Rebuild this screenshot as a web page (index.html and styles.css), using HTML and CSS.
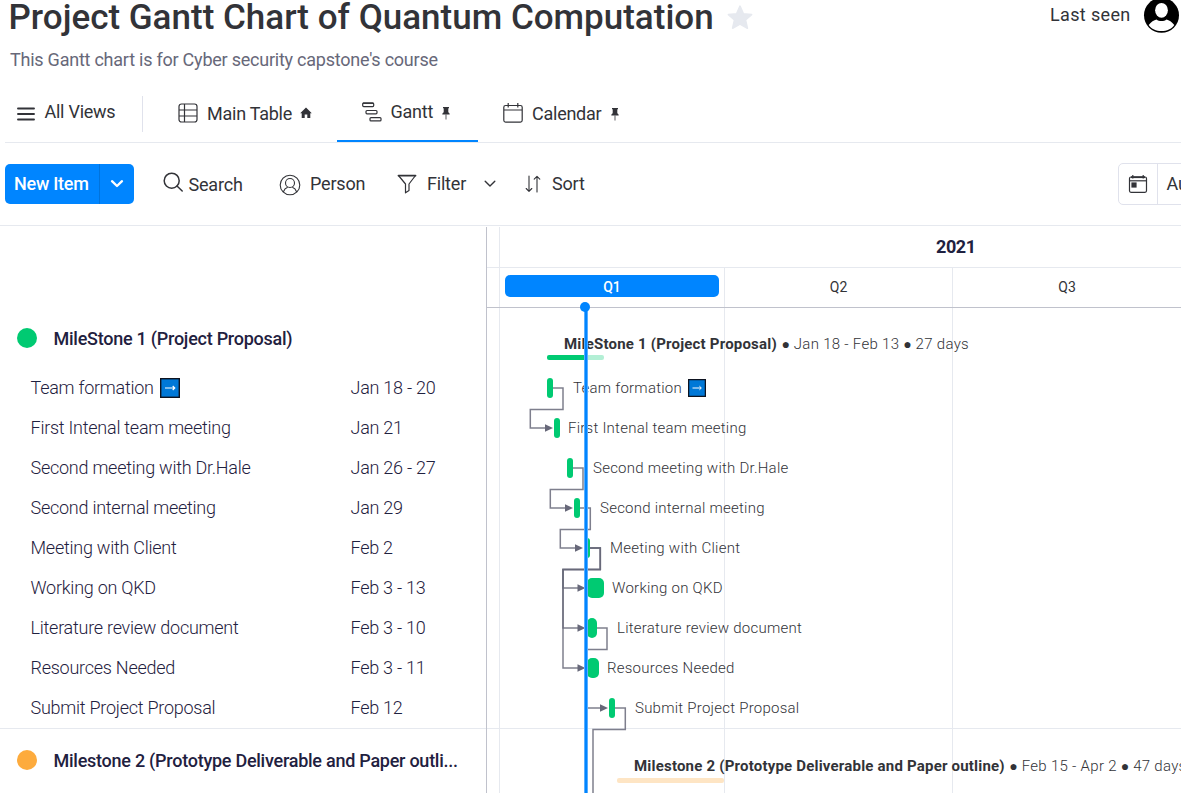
FILE: index.html
```html
<!DOCTYPE html>
<html lang="en">
<head>
<meta charset="utf-8">
<title>Project Gantt Chart of Quantum Computation</title>
<link rel="stylesheet" href="styles.css">
</head>
<body>
<div class="app">
  <header class="board-header">
    <div class="title-line">
      <h1 class="title">Project Gantt Chart of Quantum Computation</h1>
      <svg class="star" width="26" height="25" viewBox="0 0 26 25"><path d="M13 1.2 16.4 8.8 24.6 9.6 18.5 15 20.4 23.2 13 19.1 5.6 23.2 7.5 15 1.4 9.6 9.6 8.8Z" fill="#e6e9ef" stroke="#e6e9ef" stroke-width="1.6" stroke-linejoin="round"/></svg>
      <span class="last-seen">Last seen</span>
      <svg class="avatar" width="36" height="36" viewBox="0 0 36 36"><circle cx="18.500" cy="18.300" r="17.500"/><ellipse cx="18.500" cy="13.300" rx="6.400" ry="7.400" fill="#fff"/><path d="M5.700 28C8 25 11 23 13.500 22.500 16 24.500 21 24.500 23.500 22.500 26 23 29 25 31.300 28 28.500 32 24 34 18.500 34S8.500 32 5.700 28Z" fill="#fff"/></svg>
    </div>
    <p class="subtitle">This Gantt chart is for Cyber security capstone's course</p>
  </header>

  <nav class="views">
    <div class="view view-all">
      <svg width="18" height="14" viewBox="0 0 18 14"><path d="M1 1.500H17M1 7H17M1 12.500H17" stroke="#323338" stroke-width="1.900" stroke-linecap="round"/></svg>
      <span>All Views</span>
    </div>
    <div class="view view-table">
      <svg width="20" height="20" viewBox="0 0 20 20" fill="none" stroke="#323338" stroke-width="1.200"><rect x="1" y="1" width="18" height="18" rx="2.500"/><path d="M1 7H19M1 13H19M6.500 1V19"/></svg>
      <span>Main Table</span>
      <svg class="home" width="12" height="12" viewBox="0 0 12 12" fill="#323338"><path d="M6 .5 11.800 6.300H10.300V11H7.300V7.500H4.700V11H1.700V6.300H.2Z"/></svg>
    </div>
    <div class="view view-gantt">
      <svg width="20" height="20" viewBox="0 0 20 20" fill="none" stroke="#323338" stroke-width="1.200"><rect x=".7" y="1" width="11" height="3.600" rx="1"/><path d="M1 1.200H11.500" stroke-width="1.500"/><rect x="4" y="8.500" width="11" height="3.300" rx="1"/><rect x="8" y="15.600" width="11" height="3.300" rx="1"/></svg>
      <span>Gantt</span>
      <svg class="pin" width="8" height="13" viewBox="0 0 8 13" fill="#323338"><path d="M1 0H7V1.200H6.300V5.300C7.200 5.800 7.700 6.500 7.700 7.500H.3C.3 6.500.8 5.800 1.700 5.300V1.200H1Z"/><path d="M3.600 7.500H4.400V12.500H3.600Z"/></svg>
    </div>
    <div class="view view-calendar">
      <svg width="20" height="20" viewBox="0 0 20 20" fill="none" stroke="#323338" stroke-width="1.200"><rect x=".8" y="2.500" width="18.400" height="16.600" rx="1.800"/><path d="M1 7H19M5.200 0V4.500M14.800 0V4.500"/></svg>
      <span>Calendar</span>
      <svg class="pin" width="8" height="13" viewBox="0 0 8 13" fill="#323338"><path d="M1 0H7V1.200H6.300V5.300C7.200 5.800 7.700 6.500 7.700 7.500H.3C.3 6.500.8 5.800 1.700 5.300V1.200H1Z"/><path d="M3.600 7.500H4.400V12.500H3.600Z"/></svg>
    </div>
  </nav>

  <div class="toolbar">
    <div class="new-item">
      <span class="new-label">New Item</span>
      <span class="new-arrow"><svg width="14" height="10" viewBox="0 0 14 10"><path d="M2 2.200 7 7 12 2.200" fill="none" stroke="#fff" stroke-width="2.300" stroke-linecap="round" stroke-linejoin="round"/></svg></span>
    </div>
    <div class="tool tool-search">
      <svg width="21" height="21" viewBox="0 0 21 21" fill="none" stroke="#323338" stroke-width="1.500" stroke-linecap="round"><circle cx="8.700" cy="8.700" r="7.500"/><path d="M14 14 19.200 19"/></svg>
      <span>Search</span>
    </div>
    <div class="tool tool-person">
      <svg width="22" height="22" viewBox="0 0 22 22" fill="none" stroke="#323338" stroke-width="1.100"><circle cx="11" cy="11" r="9.800"/><circle cx="11" cy="9" r="4.500"/><path d="M4.300 18C5.300 15.200 7 13.900 8.700 13.300M17.700 18C16.700 15.200 15 13.900 13.300 13.300"/></svg>
      <span>Person</span>
    </div>
    <div class="tool tool-filter">
      <svg width="20" height="20" viewBox="0 0 20 20" fill="none" stroke="#323338" stroke-linejoin="round"><path d="M1.500 1.500H18.500L12 10V16.500L8.500 18.800V10Z" stroke-width="1.200"/><path d="M1.500 1.600H18.500" stroke-width="1.800" stroke-linecap="round"/></svg>
      <span>Filter</span>
      <svg class="caret" width="12" height="8" viewBox="0 0 12 8"><path d="M1.200 1.300 6 6 10.800 1.300" fill="none" stroke="#323338" stroke-width="1.400" stroke-linecap="round" stroke-linejoin="round"/></svg>
    </div>
    <div class="tool tool-sort">
      <svg width="16" height="18" viewBox="0 0 16 18" fill="none" stroke="#323338" stroke-width="1.100" stroke-linecap="round" stroke-linejoin="round"><path d="M4 1V16M1.200 13.500 4 16.300 6.800 13.500M12 17V1.500M9.200 4.200 12 1.400 14.800 4.200"/></svg>
      <span>Sort</span>
    </div>
    <div class="range">
      <span class="range-cal"><svg width="20" height="20" viewBox="0 0 20 20" fill="none" stroke="#323338" stroke-width="1.200"><rect x="1.500" y="3" width="17" height="15.300" rx="1.500"/><path d="M1.500 6.800H18.500"/><path d="M3 3.200H17" stroke-width="1.800"/><path d="M4.800 1V4.500M15.200 1V4.500"/><rect x="4" y="9" width="4" height="4" fill="#323338"/></svg></span>
      <span class="range-auto">Auto</span>
    </div>
  </div>

  <main class="gantt">
    <section class="list">
      <div class="group"><i class="dot green"></i><span>MileStone 1 (Project Proposal)</span></div>
      <div class="item"><span class="name">Team formation <svg class="emoji" width="20" height="20" viewBox="0 0 20 20"><rect x=".7" y=".7" width="18.600" height="18.600" fill="#0078d7" stroke="#0d1320" stroke-width="1.400"/><path d="M5 10H14.500M12.700 8 14.800 10 12.700 12" fill="none" stroke="#fff" stroke-width="1.100"/></svg></span><span>Jan 18 - 20</span></div>
      <div class="item"><span class="name">First Intenal team meeting</span><span>Jan 21</span></div>
      <div class="item"><span class="name">Second meeting with Dr.Hale</span><span>Jan 26 - 27</span></div>
      <div class="item"><span class="name">Second internal meeting</span><span>Jan 29</span></div>
      <div class="item"><span class="name">Meeting with Client</span><span>Feb 2</span></div>
      <div class="item"><span class="name">Working on QKD</span><span>Feb 3 - 13</span></div>
      <div class="item"><span class="name">Literature review document</span><span>Feb 3 - 10</span></div>
      <div class="item"><span class="name">Resources Needed</span><span>Feb 3 - 11</span></div>
      <div class="item"><span class="name">Submit Project Proposal</span><span>Feb 12</span></div>
      <div class="group second"><i class="dot orange"></i><span>Milestone 2 (Prototype Deliverable and Paper outli...</span></div>
    </section>

    <section class="chart">
      <div class="year"><span>2021</span></div>
      <div class="quarters">
        <div class="q q1"><span>Q1</span></div>
        <div class="q q2">Q2</div>
        <div class="q q3">Q3</div>
      </div>
      <div class="rows">
        <div class="milestone" style="--x:60px;--w:57px;--t:77px">
          <div class="m-label"><b>MileStone 1 (Project Proposal)</b><span><i>●</i> Jan 18 - Feb 13 <i>●</i> 27 days</span></div>
          <div class="m-bar green-bar"></div>
        </div>
        <div class="row" style="--x:60px;--w:6px;--g:20px"><i class="bar"></i><span>Team formation <svg class="emoji" width="18" height="18" viewBox="0 0 20 20"><rect x=".7" y=".7" width="18.600" height="18.600" fill="#0078d7" stroke="#0d1320" stroke-width="1.400"/><path d="M5 10H14.500M12.700 8 14.800 10 12.700 12" fill="none" stroke="#fff" stroke-width="1.100"/></svg></span></div>
        <div class="row" style="--x:67px;--w:6px;--g:8px"><i class="bar"></i><span>First Intenal team meeting</span></div>
        <div class="row" style="--x:80px;--w:6px;--g:20px"><i class="bar"></i><span>Second meeting with Dr.Hale</span></div>
        <div class="row" style="--x:87px;--w:6px;--g:20px"><i class="bar"></i><span>Second internal meeting</span></div>
        <div class="row" style="--x:97px;--w:6px;--g:20px"><i class="bar"></i><span>Meeting with Client</span></div>
        <div class="row" style="--x:100px;--w:17px;--g:8px"><i class="bar"></i><span>Working on QKD</span></div>
        <div class="row" style="--x:100px;--w:10px;--g:20px"><i class="bar"></i><span>Literature review document</span></div>
        <div class="row" style="--x:100px;--w:12px;--g:8px"><i class="bar"></i><span>Resources Needed</span></div>
        <div class="row" style="--x:122px;--w:6px;--g:20px"><i class="bar"></i><span>Submit Project Proposal</span></div>
        <div class="milestone second" style="--x:130px;--w:107px;--t:147px">
          <div class="m-label"><b>Milestone 2 (Prototype Deliverable and Paper outline)</b><span><i>●</i> Feb 15 - Apr 2 <i>●</i> 47 days</span></div>
          <div class="m-bar orange-bar"></div>
        </div>
        <svg class="links" width="694" height="485" viewBox="487 308 694 485">
          <g fill="none" stroke="#676879" stroke-opacity=".85" stroke-width="1.500">
            <path d="M553 388H563V409.500H530.300V428H547"/>
            <path d="M573 468H583V489.500H550.300V508H567"/>
            <path d="M580 508H590.300V529.500H560.300V548H577"/>
            <path d="M590 548H600.300V569.500H563V588H580"/>
            <path d="M590 548H600.300V569.500H563V628H580"/>
            <path d="M590 548H600.300V569.500H563V668H580"/>
            <path d="M597 628H607V649.500H586V708H603"/>
            <path d="M615 708H625.300V729.500H593V793"/>
          </g>
          <path fill="#676879" d="M545 424.300 553 428 545 431.700ZM565 504.300 573 508 565 511.700ZM575 544.300 583 548 575 551.700ZM577.500 584.300 585.500 588 577.500 591.700ZM577.500 624.300 585.500 628 577.500 631.700ZM577.500 664.300 585.500 668 577.500 671.700ZM600 704.300 608 708 600 711.700Z"/>
        </svg>
        <div class="today"></div>
      </div>
    </section>
  </main>
</div>
</body>
</html>
```
FILE: styles.css
```css
* { box-sizing: border-box; }
body { margin: 0; background: #fff; font-family: Roboto, "Liberation Sans", sans-serif; color: #323338; }
svg { display: block; flex: none; }
.app { width: 1181px; height: 793px; overflow: hidden; display: flex; flex-direction: column; white-space: nowrap; }

.board-header { height: 86px; flex: none; padding-left: 8px; }
.title-line { display: flex; height: 34px; }
.title { margin: 0; width: 719px; padding-left: .5px; font-size: 35px; font-weight: 500; line-height: 36px; }
.star { margin-top: 5px; }
.last-seen { margin-left: 297px; line-height: 29px; font-size: 18px; letter-spacing: .35px; width: 94px; }
.avatar { margin-top: -3px; margin-left: -1px; }
.subtitle { margin: 14px 0 0 2px; font-size: 18px; line-height: 24px; letter-spacing: -.235px; color: #676879; }

.views { display: flex; height: 57px; flex: none; margin-left: 5px; border-bottom: 1px solid #e6e9ef; font-size: 18px; letter-spacing: -.25px; }
.view { display: flex; align-items: center; height: 56px; }
.view-all { width: 138px; height: 36px; margin-top: 10px; padding-left: 12px; gap: 9.5px; border-right: 1px solid #e0e2ec; }
.view-all span { margin-top: -5px; }
.view-table { padding: 0 0 2px 34.5px; gap: 9.5px; width: 194px; }
.home { margin-left: -1.5px; }
.view-gantt { width: 141px; padding: 0 0 3px 25px; gap: 8.5px; border-bottom: 2px solid #0085ff; }
.view-calendar { padding: 0 0 2px 25px; gap: 9px; }
.view-calendar .pin { margin-left: 1px; }
.view .pin { margin-top: 3px; }

.toolbar { display: flex; align-items: center; height: 83px; flex: none; border-bottom: 1px solid #e6e9ef; padding: 0 0 1px 5px; font-size: 18px; letter-spacing: -.2px; }
.new-item { display: flex; flex: none; width: 129px; height: 40px; background: #0085ff; border-radius: 5px; color: #fff; font-weight: 500; letter-spacing: -.25px; overflow: hidden; }
.new-label { width: 95px; padding-left: 9px; line-height: 40px; border-right: 1px solid #0073dd; }
.new-arrow { flex: 1; display: flex; align-items: center; justify-content: center; }
.tool { display: flex; align-items: center; height: 40px; flex: none; }
.tool-search { margin-left: 29px; gap: 4.5px; width: 116px; }
.tool-search svg { margin-top: -2px; }
.tool-search span { margin-top: 1px; }
.tool-person { gap: 9px; width: 118px; }
.tool-person svg { margin-top: 2px; }
.tool-filter { gap: 10px; width: 128px; }
.caret { margin-left: 8px; margin-top: 1px; }
.tool-sort { gap: 11px; width: 593px; }
.range { display: flex; width: 100px; height: 42px; flex: none; border: 1px solid #e0e2ec; border-radius: 5px; }
.range-cal { width: 39px; display: flex; align-items: center; justify-content: center; border-right: 1px solid #e0e2ec; }
.range-auto { padding-left: 8.5px; line-height: 40px; }

.gantt { display: flex; flex: 1; }
.list { width: 486px; margin-top: 1px; padding-top: 81px; color: #1f2140; letter-spacing: -.25px; }
.group { display: flex; align-items: center; height: 60px; padding-left: 17px; gap: 16.5px; font-weight: 500; font-size: 18px; }
.group.second { border-top: 1px solid #e6e9ef; height: 64px; letter-spacing: -.255px; }
.second .dot { margin-top: -1px; }
.dot { width: 20px; height: 20px; border-radius: 50%; }
.green { background: #00ca72; }
.orange { background: #fdab3d; }
.item { display: flex; height: 40px; align-items: center; padding: 0 0 2px 30.5px; font-size: 18px; font-weight: 300; }
.name { width: 320px; display: flex; gap: 6px; align-items: center; }
.name .emoji { position: relative; top: 1px; }

.chart { width: 695px; margin-top: 1px; border-left: 1px solid #c0c2cc; flex: none;
  background: linear-gradient(#e6e9ef, #e6e9ef) 12px 0 / 1px 100% no-repeat; }
.year { height: 41px; border-bottom: 1px solid #e6e9ef; padding-left: 449px; font-size: 18px; font-weight: 700; line-height: 40px; letter-spacing: -.4px; color: #1f2140; }
.quarters { display: flex; height: 40px; padding-left: 13px; border-bottom: 1px solid #c0c2cc; font-size: 14px; line-height: 38px; text-align: center; }
.q { border-right: 1px solid #e6e9ef; width: 228px; flex: none; }
.q1 { width: 225px; padding: 7px 5px 0; }
.q1 span { display: block; height: 22px; line-height: 24px; background: #0085ff; border-radius: 5px; color: #fff; font-weight: 500; }
.q3 { width: 229px; }
.rows { position: relative; height: 485px;
  background: linear-gradient(#e6e9ef, #e6e9ef) 237px 0 / 1px 100% no-repeat, linear-gradient(#e6e9ef, #e6e9ef) 465px 0 / 1px 100% no-repeat; }
.row { display: flex; align-items: center; height: 40px; padding-left: var(--x); gap: var(--g); font-size: 15px; font-weight: 300; letter-spacing: .24px; }
.row span { display: flex; gap: 6px; align-items: center; }
.bar { width: var(--w); height: 20px; border-radius: min(5px, calc(var(--w) / 2)); background: #00ca72; }
.milestone { height: 60px; padding-top: 25px; }
.milestone.second { border-top: 1px solid #e6e9ef; height: 65px; padding-top: 26px; }
.m-label { display: flex; gap: 4.5px; padding-left: var(--t); height: 22px; line-height: 22px; font-size: 15px; font-weight: 300; letter-spacing: .29px; }
.m-label b { font-weight: 700; letter-spacing: .2px; }
.m-label i { font-style: normal; font-size: 14px; letter-spacing: 0; }
.m-bar { margin-left: var(--x); width: var(--w); height: 5px; border-radius: 2px; }
.second .m-bar { margin-top: 1px; }
.green-bar { background: linear-gradient(90deg, #00ca72 39px, #b3efd5 39px); }
.orange-bar { background: #fee5c4; }
.links { position: absolute; left: 0; top: 0; }
.today { position: absolute; left: 97px; top: -1px; width: 4px; bottom: 0; background: linear-gradient(90deg, #59aeff 1px, #0085ff 1px 3px, #59aeff 3px); }
.today::before { content: ""; position: absolute; left: -4px; top: -5px; width: 10px; height: 10px; border-radius: 50%; background: #0085ff; }
```
